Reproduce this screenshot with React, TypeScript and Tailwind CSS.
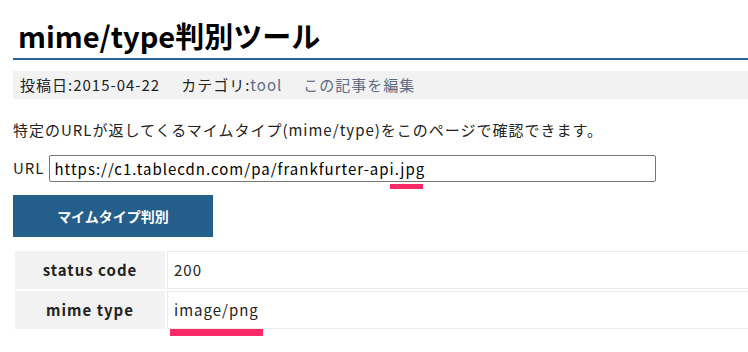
export default function App() {
    const rows = [
        { label: 'status code', value: '200' },
        { label: 'mime type', value: 'image/png' },
    ];

    return (
        <div className="relative w-[748px] h-[352px] overflow-hidden bg-white text-[#222] font-['Noto_Sans_CJK_JP','Noto_Sans',sans-serif]">
            <div className="w-[900px] pl-[13px]">
                {/* Title */}
                <h1 className="pt-[15px] pb-[3px] pl-[5px] text-[29px] leading-[40px] font-bold text-black border-b-2 border-[#2a6495]">
                    mime/type判別ツール
                </h1>

                {/* Meta */}
                <div className="mt-[11px] h-[28px] flex items-center pl-[7px] bg-[#f2f2f2] text-[15px] tracking-[1px] gap-[21px]">
                    <span>投稿日:2015-04-22</span>
                    <span>
                        カテゴリ:<a className="text-[#5c6c85]">tool</a>
                    </span>
                    <a className="text-[#5c6c85]">この記事を編集</a>
                </div>

                {/* Description */}
                <p className="mt-[19px] text-[15px] leading-[24px] tracking-[1px]">
                    特定のURLが返してくるマイムタイプ(mime/type)をこのページで確認できます。
                </p>

                {/* URL input */}
                <div className="mt-[13px] h-[27px] flex items-center gap-[4px] text-[15px] tracking-[1px]">
                    <label>URL</label>
                    <input
                        type="text"
                        defaultValue="https://c1.tablecdn.com/pa/frankfurter-api.jpg"
                        className="w-[607px] h-[27px] px-[5px] border border-[#767676] rounded-[2px] text-[15px] tracking-[1px] text-black outline-none"
                    />
                </div>

                {/* Button */}
                <button className="mt-[13px] w-[200px] h-[42px] bg-[#245e8a] text-white text-[14px] font-bold">
                    マイムタイプ判別
                </button>

                {/* Result */}
                <table className="mt-[12px] w-[850px] border-separate border-spacing-[2px] text-[15px] tracking-[1px]">
                    <tbody>
                        {rows.map((row) => (
                            <tr key={row.label} className="h-[38px]">
                                <th className="w-[150px] bg-[#f2f2f2] font-bold text-center">
                                    {row.label}
                                </th>
                                <td className="pl-[6px] border border-[#ebebeb]">{row.value}</td>
                            </tr>
                        ))}
                    </tbody>
                </table>
            </div>

            {/* Highlight markers */}
            <div className="absolute left-[390px] top-[184px] w-[33px] h-[5px] bg-[#fe2a68]" />
            <div className="absolute left-[170px] top-[329px] w-[93px] h-[7px] bg-[#fe2a68]" />
        </div>
    );
}
